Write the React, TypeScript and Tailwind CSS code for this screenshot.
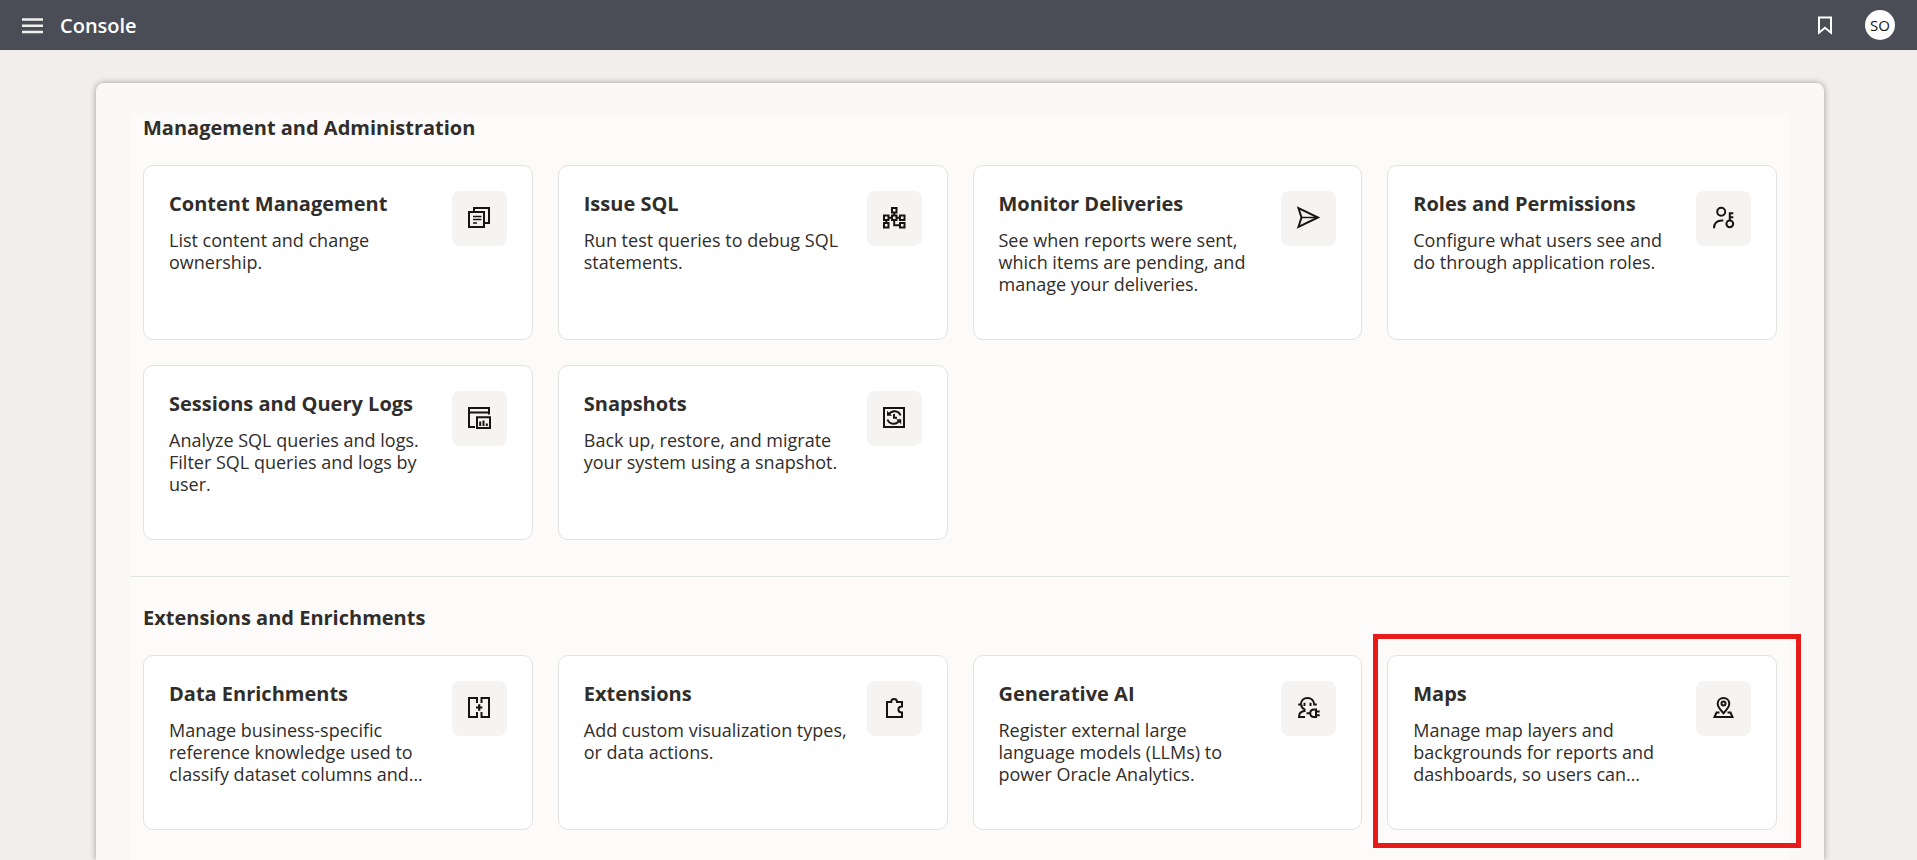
import type { ReactNode } from "react";

type Tile = {
  title: string;
  text: string;
  icon: ReactNode;
  marked?: boolean;
};

const contentIcon = (
  <>
    <path d="M2 6h15v15H2z" />
    <path d="M7 5V2h15v15h-4" />
    <path d="M6 10.5h8.500M6 13.500h8.500M6 17h4" strokeWidth="1.500" />
  </>
);

const sqlIcon = (
  <>
    <path d="M10 2h4.500v4.500H10zM10 9.500h4.500V14H10zM2 9.500h4.500V14H2zM18 9.500h4.500V14H18zM2 17h4.500v4.500H2zM18 17h4.500v4.500H18z" />
    <path d="M12.200 6v3.500M6.500 11.800H10M14 11.800h4M4.300 13.500V17M12.200 13.500v5.700H18" />
  </>
);

const sendIcon = (
  <>
    <path d="M2.500 2.200L22 11.500 2.500 20.800l3-9.300z" />
    <path d="M5.500 11.500H20" strokeWidth="1.500" />
  </>
);

const rolesIcon = (
  <>
    <circle cx="10.200" cy="5.800" r="4" />
    <path d="M3 22.200c0-4.800 3-7.700 7.800-7.700h1.500" />
    <circle cx="18.800" cy="17.800" r="3.400" />
    <path d="M18.800 14.200V6.200M18.800 7.200H22.300M18.800 11.200h3.500" />
  </>
);

const sessionsIcon = (
  <>
    <path d="M8 21H2V2h20v6.500M2 6.500h20" />
    <path d="M10 11.200h13v10.800H10z" />
    <path d="M13.200 20v-4.500M16.500 20v-5.500M19.800 20v-2.500" />
  </>
);

const snapshotsIcon = (
  <>
    <path d="M2 2h20v19H2z" />
    <path d="M7 8.300c2.500-4.200 9.500-4.200 11.500 1.200M17 14.700c-2.500 4.200-9.500 4.200-11.500-1.200" />
    <path d="M12 8v3.800h3" />
    <path d="M5 4.800v5h5zM19.200 18.200v-5h-5z" fill="currentColor" stroke="none" />
  </>
);

const enrichIcon = (
  <>
    <path d="M10 7V2H2v19h8v-5M14.500 7V2H22v19h-7.500v-5" />
    <path d="M12.200 8.300v6.400M9 11.500h6.400" strokeWidth="2.200" />
  </>
);

const puzzleIcon = (
  <path d="M5 6h4.200c0-4 5.800-4 5.800 0h5v4.500c-4.800 0-4.800 6 0 6V21H5z" />
);

const aiIcon = (
  <>
    <path d="M2.200 8.500h2.600C5 4.500 7.800 2 11.500 2s6.500 2.500 6.700 6.500h2.600" />
    <path d="M5.300 8.500c0 2.300.9 3.900 3.200 4.900v1.600c-3.800.3-5.500 2-5.500 6h6" />
    <path d="M8.500 6.800v3.200M14.500 6.800v3.200" />
    <path d="M20 13.500h-2c-5 0-5 7.500 0 7.500h2zM10.500 17.200h3.800M20 15.500h3.700M20 19.200h3.700" />
  </>
);

const mapIcon = (
  <>
    <path d="M12.500 17.200C8.500 13 6.700 10.500 6.700 7.800c0-7.700 11.600-7.700 11.600 0 0 2.700-1.800 5.200-5.800 9.400z" />
    <circle cx="12.500" cy="7.500" r="2" />
    <path d="M8.500 16.500h-3L3.500 21h18l-2-4.500h-3" />
  </>
);

const management: Tile[] = [
  { title: "Content Management", text: "List content and change ownership.", icon: contentIcon },
  { title: "Issue SQL", text: "Run test queries to debug SQL statements.", icon: sqlIcon },
  {
    title: "Monitor Deliveries",
    text: "See when reports were sent, which items are pending, and manage your deliveries.",
    icon: sendIcon,
  },
  {
    title: "Roles and Permissions",
    text: "Configure what users see and do through application roles.",
    icon: rolesIcon,
  },
  {
    title: "Sessions and Query Logs",
    text: "Analyze SQL queries and logs. Filter SQL queries and logs by user.",
    icon: sessionsIcon,
  },
  {
    title: "Snapshots",
    text: "Back up, restore, and migrate your system using a snapshot.",
    icon: snapshotsIcon,
  },
];

const extensions: Tile[] = [
  {
    title: "Data Enrichments",
    text: "Manage business-specific reference knowledge used to classify dataset columns and…",
    icon: enrichIcon,
  },
  { title: "Extensions", text: "Add custom visualization types, or data actions.", icon: puzzleIcon },
  {
    title: "Generative AI",
    text: "Register external large language models (LLMs) to power Oracle Analytics.",
    icon: aiIcon,
  },
  {
    title: "Maps",
    text: "Manage map layers and backgrounds for reports and dashboards, so users can…",
    icon: mapIcon,
    marked: true,
  },
];

function Card({ title, text, icon, marked }: Tile) {
  return (
    <li className="relative">
      <a
        href="#"
        className="flex h-[175px] items-start justify-between rounded-[10px] border border-[#e0e3e2] bg-white p-[25px]"
      >
        <div className="min-w-0 flex-1">
          <h3 className="text-[20px] leading-[26px] font-bold whitespace-nowrap">{title}</h3>
          <p className="mt-3 max-w-[266px] text-[18px] leading-[22px]">{text}</p>
        </div>
        <span className="flex size-[55px] shrink-0 items-center justify-center rounded-lg bg-[#f5f4f2] text-[#161513]">
          <svg viewBox="0 0 25 25" className="size-[25px]" fill="none" stroke="currentColor" strokeWidth="2" aria-hidden="true">
            {icon}
          </svg>
        </span>
      </a>
      {marked && (
        <div className="pointer-events-none absolute -top-[21px] -right-6 -bottom-[18px] -left-[14px] border-5 border-[#e81b1b]" />
      )}
    </li>
  );
}

function Section({ title, tiles }: { title: string; tiles: Tile[] }) {
  return (
    <section className="px-3">
      <h2 className="text-[20px] leading-7 font-bold">{title}</h2>
      <ul className="mt-[23px] grid grid-cols-4 gap-[25px]">
        {tiles.map((tile) => (
          <Card key={tile.title} {...tile} />
        ))}
      </ul>
    </section>
  );
}

export default function App() {
  return (
    <div className="flex min-h-screen flex-col bg-[#f0efed] font-['Open_Sans',sans-serif] text-[#312d2a]">
      <header className="flex h-[50px] items-center bg-[#4a4d55] pr-[22px] pl-5 text-white">
        <button type="button" aria-label="Navigator" className="flex size-[25px] items-center justify-center">
          <svg viewBox="0 0 25 25" className="size-[25px]" stroke="#f1f0ee" strokeWidth="2.500" aria-hidden="true">
            <path d="M2 6.500h21M2 12.800h21M2 19h21" />
          </svg>
        </button>
        <h1 className="ml-[15px] pt-0.5 text-[20px] leading-7 font-semibold">Console</h1>
        <button type="button" aria-label="Bookmark" className="ml-auto flex size-[25px] items-center justify-center">
          <svg viewBox="0 0 25 25" className="size-[25px]" fill="none" stroke="white" strokeWidth="2" aria-hidden="true">
            <path d="M6 4.500h12v15.200l-6-5-6 5z" />
          </svg>
        </button>
        <button
          type="button"
          aria-label="Account"
          className="ml-[27px] flex size-[30px] items-center justify-center rounded-full bg-white text-[15px] text-[#161513]"
        >
          SO
        </button>
      </header>
      <main className="mt-[33px] mr-[93px] ml-24 flex flex-1 flex-col rounded-t-lg bg-[#faf9f8] px-[35px] pt-[31px] shadow-[0_0_6px_rgba(0,0,0,0.35)]">
        <div className="flex-1 bg-[#fcfbfa]">
          <Section title="Management and Administration" tiles={management} />
          <hr className="mt-9 mb-[27px] border-[#dfe3e1]" />
          <Section title="Extensions and Enrichments" tiles={extensions} />
        </div>
      </main>
    </div>
  );
}
